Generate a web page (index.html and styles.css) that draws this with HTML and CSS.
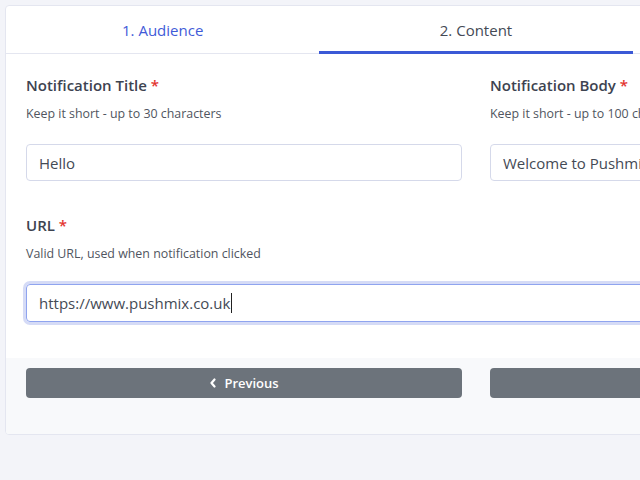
FILE: index.html
```html
<!DOCTYPE html>
<html lang="en">
<head>
<meta charset="utf-8">
<title>Wizard</title>
<link rel="stylesheet" href="styles.css">
</head>
<body>
<div class="card">
  <div class="tabs">
    <div class="tab done">1. Audience</div>
    <div class="tab active">2. Content</div>
    <div class="tab">3. Review</div>
  </div>
  <div class="content">
    <div class="row">
      <div class="group">
        <label class="label">Notification Title <span class="req">*</span></label>
        <div class="help">Keep it short - up to 30 characters</div>
        <div class="input">Hello</div>
      </div>
      <div class="group">
        <label class="label">Notification Body <span class="req">*</span></label>
        <div class="help">Keep it short - up to 100 characters</div>
        <div class="input">Welcome to Pushmix</div>
      </div>
    </div>
    <div class="group url">
      <label class="label">URL <span class="req">*</span></label>
      <div class="help">Valid URL, used when notification clicked</div>
      <div class="input focus">https://www.pushmix.co.uk<span class="caret"></span></div>
    </div>
  </div>
  <div class="footer">
    <button class="btn"><svg class="chev" width="8" height="10" viewBox="0 0 8 10"><path d="M5.5 1.5 L2.5 5 L5.5 8.5" fill="none" stroke="#fff" stroke-width="2.2" stroke-linecap="round" stroke-linejoin="round"/></svg>Previous</button>
    <button class="btn">Next</button>
  </div>
</div>
</body>
</html>
```
FILE: styles.css
```css
html, body {
  margin: 0;
  overflow: hidden;
}
body {
  background: #f3f4f9;
  padding: 5px;
  width: 1000px;
  font-family: "Open Sans", "Noto Sans", sans-serif;
  color: #3d4350;
}
.card {
  width: 940px;
  background: #fff;
  border: 1px solid #e4e6f0;
  border-radius: 4px;
  overflow: hidden;
}
.tabs {
  display: flex;
  height: 47px;
  border-bottom: 1px solid #e4e6f0;
}
.tab {
  flex: 1;
  display: flex;
  align-items: center;
  justify-content: center;
  font-size: 15px;
  color: #444a55;
  margin-bottom: -1px;
  border-bottom: 3px solid transparent;
  padding-top: 2px;
}
.tab.done { color: #3f5bd8; }
.tab.active { border-bottom-color: #3b59d6; }
.content {
  padding: 20px 20px 36px;
}
.row {
  display: grid;
  grid-template-columns: 436px 436px;
  gap: 28px;
}
.label {
  display: block;
  font-size: 15px;
  font-weight: 600;
  line-height: 22px;
  color: #3d4350;
}
.req { color: #e3342f; }
.help {
  font-size: 12.4px;
  line-height: 18px;
  margin-top: 9px;
  color: #505560;
}
.input {
  margin-top: 21px;
  height: 37px;
  box-sizing: border-box;
  border: 1px solid #d5d9ea;
  border-radius: 4px;
  padding: 0 12px;
  display: flex;
  align-items: center;
  font-size: 15px;
  color: #444a55;
  white-space: nowrap;
  overflow: hidden;
}
.url { margin-top: 33px; }
.input.focus {
  height: 38px;
  border-color: #8fa4ef;
  box-shadow: 0 0 0 3px rgba(63, 91, 216, 0.22);
  overflow: visible;
}
.caret {
  display: inline-block;
  width: 1px;
  height: 20px;
  background: #222;
  margin-left: 1px;
}
.footer {
  background: #f8f9fb;
  padding: 10px 20px 36px;
  display: grid;
  grid-template-columns: 436px 436px;
  gap: 28px;
}
.btn {
  height: 30px;
  border: none;
  border-radius: 4px;
  background: #6c737b;
  color: #fff;
  font-family: inherit;
  font-size: 13px;
  font-weight: 600;
  display: flex;
  align-items: center;
  justify-content: center;
  gap: 7px;
}
.chev { display: block; }
```
